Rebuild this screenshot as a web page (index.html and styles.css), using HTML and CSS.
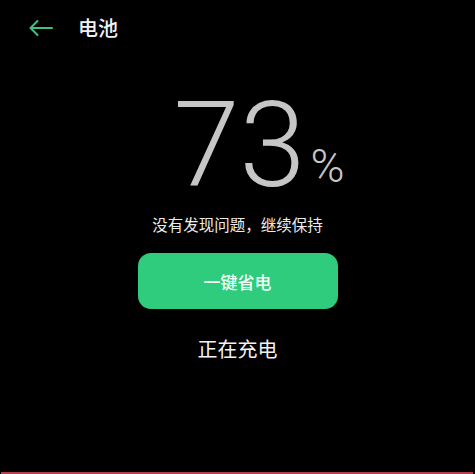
FILE: index.html
```html
<!DOCTYPE html>
<html lang="zh">
<head>
<meta charset="utf-8">
<link rel="stylesheet" href="styles.css">
</head>
<body>
<div class="screen">
  <header class="header">
    <svg class="back" width="24" height="16" viewBox="0 0 24 16">
      <path d="M1.5 8 H23 M8.5 1 L1.5 8 L8.5 15" fill="none" stroke="#3fbf82" stroke-width="2" stroke-linecap="round" stroke-linejoin="round"/>
    </svg>
    <h1 class="title">电池</h1>
  </header>
  <main class="content">
    <div class="level">
      <span class="num">73</span><span class="pct">%</span>
    </div>
    <p class="status">没有发现问题，继续保持</p>
    <button class="save">一键省电</button>
    <p class="charging">正在充电</p>
  </main>
  <div class="bottom-line"></div>
</div>
</body>
</html>
```

FILE: styles.css
```css
html, body {
  margin: 0;
  padding: 0;
  background: #000;
}
.screen {
  height: 474px;
  display: flex;
  flex-direction: column;
  background: #000;
  font-family: "Noto Sans CJK SC", "Noto Sans", sans-serif;
  color: #fff;
}
.header {
  display: flex;
  align-items: center;
  height: 56px;
  padding-left: 29px;
}
.back {
  display: block;
  margin-right: 25px;
}
.title {
  margin: 0;
  font-size: 20px;
  font-weight: 500;
  line-height: 28px;
  color: #f2f2f2;
}
.content {
  display: flex;
  flex-direction: column;
  align-items: center;
}
.level {
  position: relative;
  margin-top: 32px;
  margin-left: 4px;
  height: 116px;
}
.num {
  display: block;
  font-family: "Roboto", sans-serif;
  font-weight: 300;
  font-size: 119px;
  line-height: 116px;
  color: #c6c6c6;
}
.pct {
  position: absolute;
  left: 100%;
  bottom: 15px;
  margin-left: 5px;
  font-family: "Roboto", sans-serif;
  font-weight: 300;
  font-size: 46px;
  line-height: 46px;
  color: #c6c6c6;
}
.status {
  margin: 12px 0 0;
  font-size: 15.5px;
  line-height: 16px;
  color: #ececec;
}
.save {
  margin-top: 21px;
  width: 200px;
  height: 56px;
  border: none;
  border-radius: 13px;
  background: #2ecc7c;
  color: #f4fff8;
  font-family: "Noto Sans CJK SC", "Noto Sans", sans-serif;
  font-size: 17px;
  font-weight: 500;
}
.charging {
  margin: 26px 0 0;
  font-size: 20px;
  line-height: 28px;
  color: #f2f2f2;
}
.bottom-line {
  margin-top: auto;
  margin-left: 1px;
  margin-right: 2px;
  height: 2px;
  background: #b8404e;
}
```
